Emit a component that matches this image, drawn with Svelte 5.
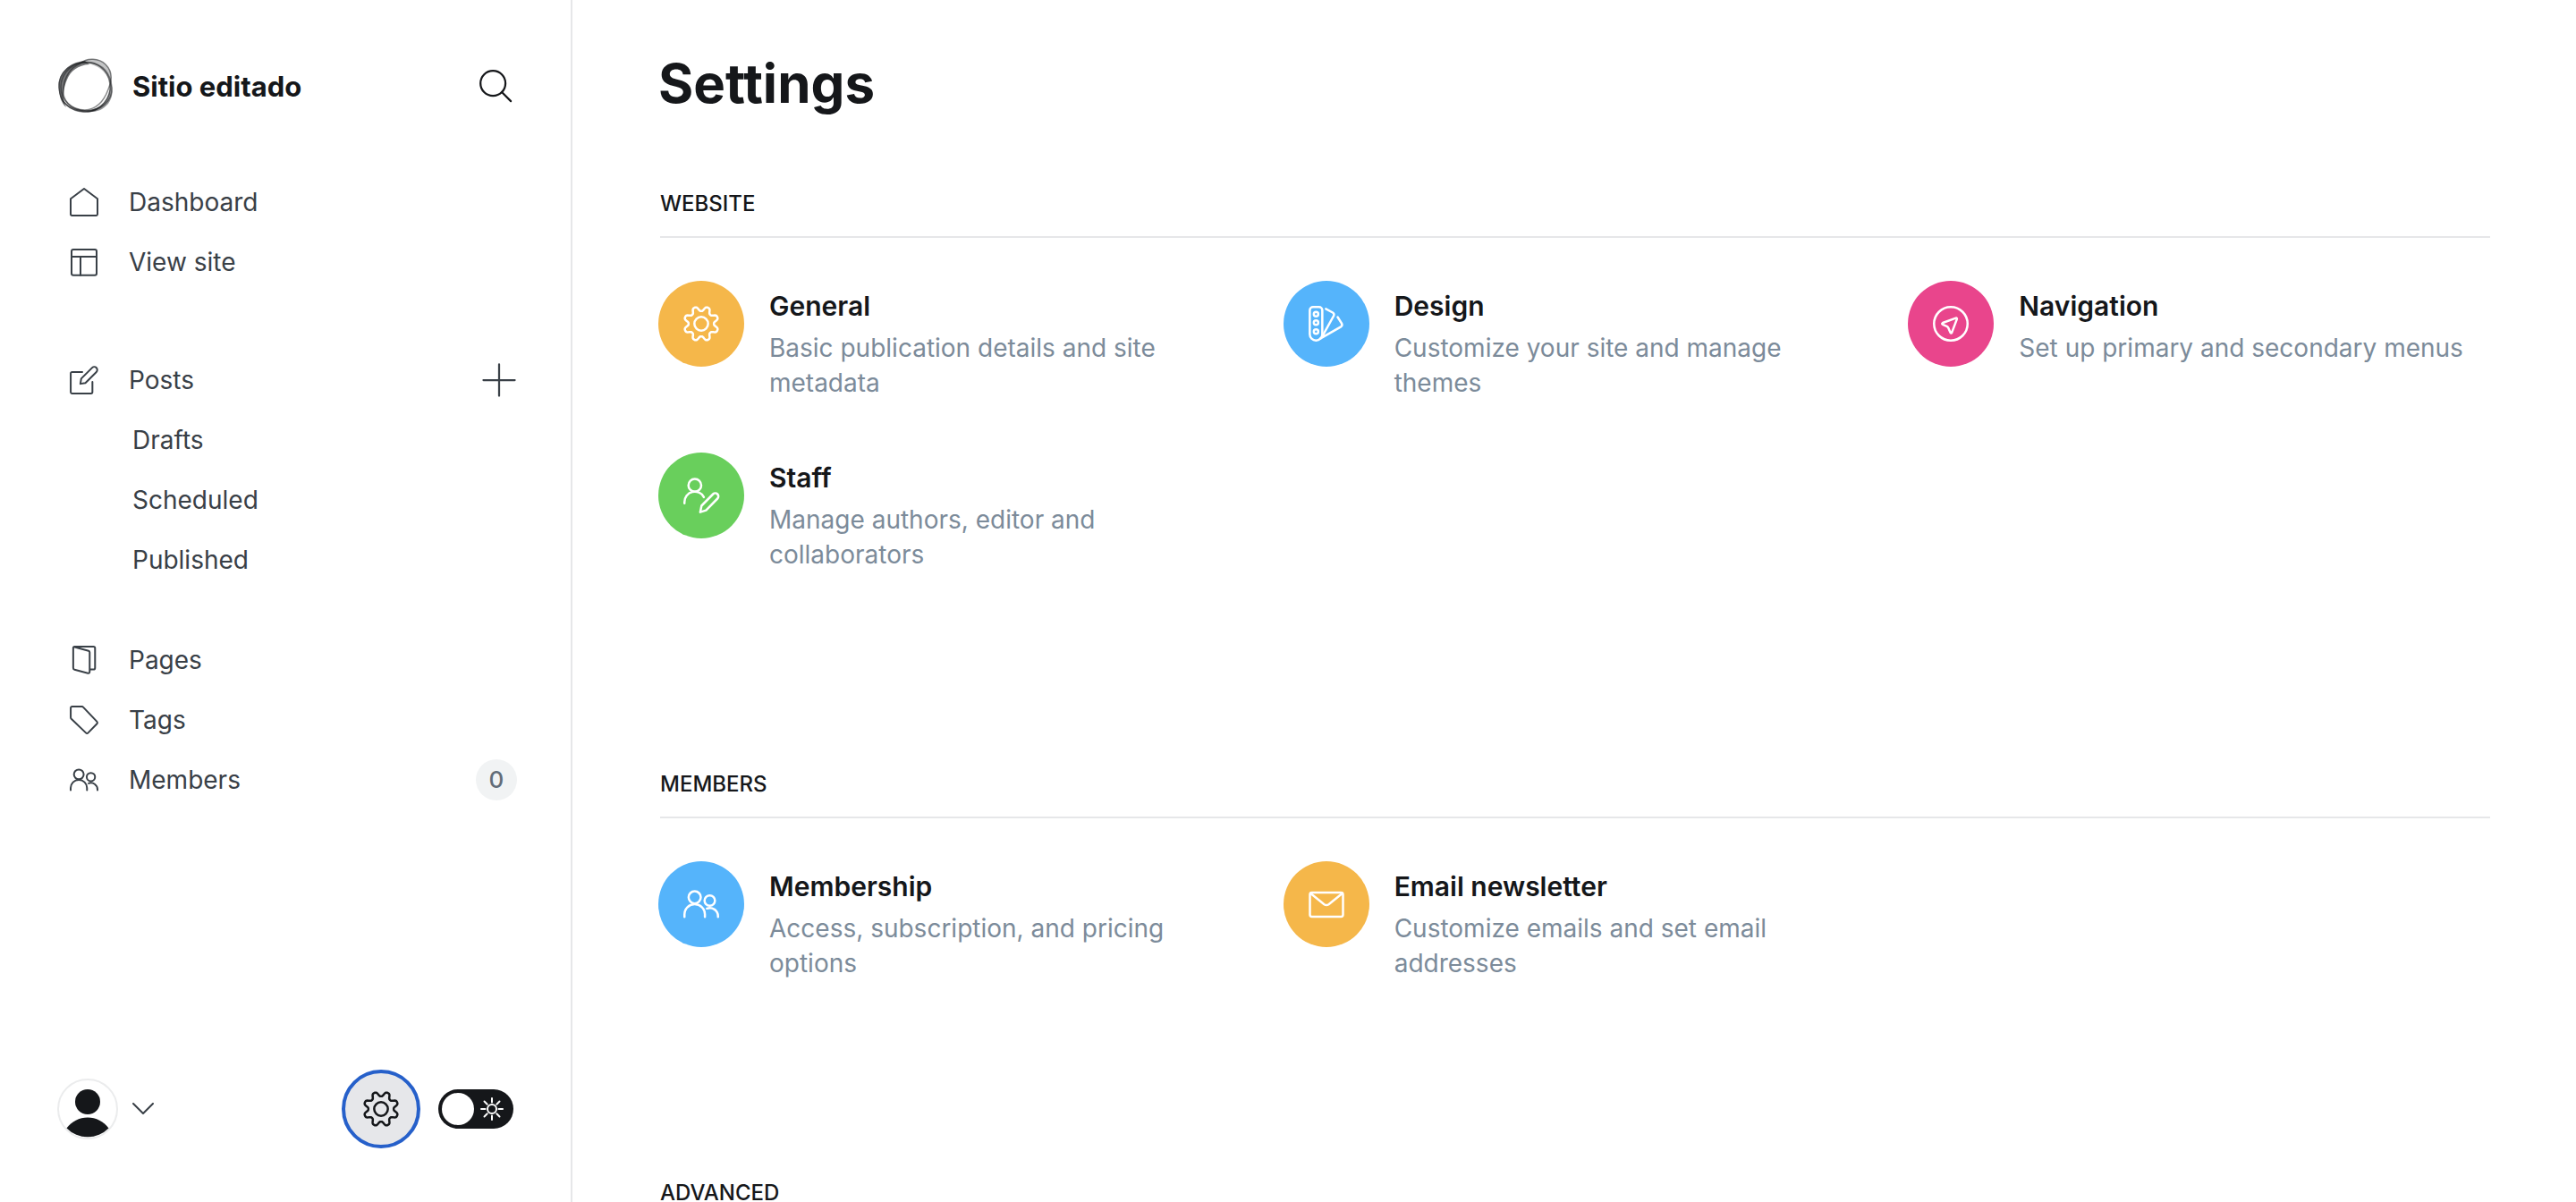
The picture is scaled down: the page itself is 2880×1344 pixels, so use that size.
<script>
  const website = [
    { icon: 'gear', color: 'yellow', title: 'General', text: 'Basic publication details and site metadata' },
    { icon: 'swatch', color: 'blue', title: 'Design', text: 'Customize your site and manage themes' },
    { icon: 'compass', color: 'pink', title: 'Navigation', text: 'Set up primary and secondary menus' },
    { icon: 'staff', color: 'green', title: 'Staff', text: 'Manage authors, editor and collaborators' }
  ];
  const members = [
    { icon: 'members', color: 'blue', title: 'Membership', text: 'Access, subscription, and pricing options' },
    { icon: 'email', color: 'yellow', title: 'Email newsletter', text: 'Customize emails and set email addresses' }
  ];
  const sections = [
    { id: 'website', name: 'Website', items: website },
    { id: 'members', name: 'Members', items: members },
    { id: 'advanced', name: 'Advanced', items: [] }
  ];

  // Eight rounded teeth around a hub, on a 24 unit grid
  function gearPath() {
    const pts = [];
    for (let i = 0; i < 192; i++) {
      const a = (i / 192) * Math.PI * 2;
      const wave = -Math.cos(8 * a);
      const r = 10.1 + 1.8 * Math.tanh(wave * 1.4);
      pts.push((12 + r * Math.cos(a)).toFixed(2) + ' ' + (12 + r * Math.sin(a)).toFixed(2));
    }
    return 'M' + pts.join('L') + 'Z';
  }
  const gear = gearPath();
  let night = $state(false);
</script>

{#snippet icon(name)}
  <svg class="icon" viewBox="0 0 24 24" aria-hidden="true">
    {#if name === 'home'}
      <path d="M.75 9.2 12 .75 23.25 9.2V22a1.2 1.2 0 0 1-1.2 1.2H1.95A1.2 1.2 0 0 1 .75 22z" />
    {:else if name === 'layout'}
      <rect x="1.5" y="1.5" width="21" height="21.5" rx="1.5" /><path d="M1.5 7.5h21M9 7.5V23" />
    {:else if name === 'posts'}
      <path d="M10.5 5.2H2A1.2 1.2 0 0 0 .8 6.4V22A1.2 1.2 0 0 0 2 23.2h15.8A1.2 1.2 0 0 0 19 22v-8.5" />
      <path d="m8.9 15.1.7-4.3 9.2-9.2a2.4 2.4 0 0 1 3.5 3.6l-9.2 9.2z" />
    {:else if name === 'pages'}
      <path d="M3.4.9 15.8 4.3q.9.3.9 1.3v16.2q0 1.6-1.5 1.2L4 20.1q-1.1-.3-1.1-1.5V1.9q0-1.2 1.2-1.2h15.7q1.4 0 1.4 1.4v16.4q0 1.4-1.4 1.4h-3.1" />
    {:else if name === 'tags'}
      <path d="M.8 9.9V2A1.2 1.2 0 0 1 2 .8h8.1a1.8 1.8 0 0 1 1.3.6l11.4 12a1.3 1.3 0 0 1 0 1.8l-7.4 7.6a1.3 1.3 0 0 1-1.9 0L1.3 11.1a1.8 1.8 0 0 1-.5-1.2z" />
    {:else if name === 'members'}
      <circle cx="7.6" cy="7.4" r="4.1" /><path d="M.75 20.6v-1.8a6.6 6.6 0 0 1 13.7 0v1.8" />
      <circle cx="17.7" cy="9.6" r="3.5" /><path d="M15.8 14.9a5.5 5.5 0 0 1 7.45 5.2v.5" />
    {:else if name === 'staff'}
      <circle cx="7.7" cy="5.2" r="4.3" /><path d="M.75 17.3v-.9a6.9 6.9 0 0 1 13-3.3" />
      <path d="m11.3 23.2.9-4.3 7.7-7.8a2.1 2.1 0 0 1 3 3l-7.7 7.9z" />
    {:else if name === 'gear'}
      <path d={gear} /><circle cx="12" cy="12" r="4.6" />
    {:else if name === 'swatch'}
      <path d="M.8 3A2.2 2.2 0 0 1 3 .8h4A2.2 2.2 0 0 1 9.2 3v16a4.2 4.2 0 0 1-8.4 0z" />
      <circle cx="5" cy="5.5" r="1.5" /><circle cx="5" cy="11.3" r="1.5" /><circle cx="5" cy="17.2" r="1.5" />
      <path d="m11.6 2 4.6 2.5a1.7 1.7 0 0 1 .7 2.1L9.2 20.5M19.5 7.5l2.7 4.3a1.7 1.7 0 0 1-.5 2.2L7.8 22" />
    {:else if name === 'compass'}
      <circle cx="12" cy="12" r="11.25" />
      <path d="M15.4 8.2 6.6 11.4q-.9.5 0 1.1l2.700 1.200q.8.400 1.100 1.200l1.300 3q.6.800 1 0l3.400-9q.2-.9-.7-.7z" />
    {:else if name === 'email'}
      <rect x=".9" y="4.2" width="22.2" height="16.2" rx="1.3" /><path d="m1.6 4.9 8.9 7.2q1.5 1 3 0l8.9-7.2" />
    {:else if name === 'search'}
      <circle cx="10.1" cy="10.1" r="9.3" /><path d="m16.7 16.7 6.7 6.7" />
    {:else if name === 'plus'}
      <path d="M12 .3v23.4M.3 12h23.4" />
    {:else if name === 'sun'}
      <circle cx="12" cy="12" r="5" /><path d="M12 0v4.5M12 19.5V24M0 12h4.5M19.5 12H24M3.5 3.5l3.2 3.2M17.3 17.3l3.2 3.2M20.5 3.5l-3.2 3.2M6.7 17.3l-3.2 3.2" />
    {/if}
  </svg>
{/snippet}

<div class="app">
  <aside class="sidebar">
    <header class="site">
      <svg class="logo" viewBox="0 0 64 64" aria-hidden="true">
        <path class="dark" d="M31 4C14 5 1 17 1.5 33 2 44 5 52 10 56 5 46 7 34 11 25 15 15 23 9 36 8z" />
        <path class="light" d="M26 6C34 0 46 1 53 7c7 6 9 14 6 22C57 20 49 11 38 8z" />
        <path class="mid" d="M58 24c5 9 5 20-1 28-7 8-15 10-25 9 12-2 20-8 24-17 3-7 4-13 2-20z" />
        <path class="dark" d="M3 42c5 11 14 16 25 17 9 1 18-2 25-7-8 8-17 11-27 9C14 59 5 52 3 42z" />
        <path class="line" d="M36 6C16 4 1 17 2 34c1 16 12 27 29 27 18 0 31-13 30-27C60 19 51 7 36 6z" />
        <path class="line" d="M27 6C42 3 57 13 59 30 61 47 48 60 33 60 17 60 4 49 4 33 4 21 13 9 27 6z" />
        <path class="line" d="M26 7C33 0 47 1 54 8c8 8 7 19 3 28-4 11-12 22-26 23C15 59 5 48 7 35 8 22 15 11 26 7z" />
      </svg>
      <strong>Sitio editado</strong>
      <button class="plain search" aria-label="Search">{@render icon('search')}</button>
    </header>

    <nav>
      <ul class="first">
        <li><a href="#dashboard">{@render icon('home')}Dashboard</a></li>
        <li><a href="#site">{@render icon('layout')}View site</a></li>
      </ul>
      <ul>
        <li>
          <a href="#posts">{@render icon('posts')}Posts</a>
          <a class="add" href="#new-post" aria-label="New post">{@render icon('plus')}</a>
        </li>
        <li class="sub"><a href="#drafts">Drafts</a></li>
        <li class="sub"><a href="#scheduled">Scheduled</a></li>
        <li class="sub"><a href="#published">Published</a></li>
      </ul>
      <ul>
        <li><a href="#pages">{@render icon('pages')}Pages</a></li>
        <li><a href="#tags">{@render icon('tags')}Tags</a></li>
        <li><a href="#all-members">{@render icon('members')}Members</a><span class="count">0</span></li>
      </ul>
    </nav>

    <footer>
      <button class="plain user" aria-label="Account menu">
        <svg class="avatar" viewBox="0 0 68 68" aria-hidden="true">
          <circle class="ring" cx="34" cy="34" r="33" />
          <circle cx="34" cy="26" r="14" /><path d="M10.5 55.500a29 29 0 0 1 47 0 33 33 0 0 1-47 0z" />
        </svg>
        <svg class="chevron" viewBox="0 0 24 14" aria-hidden="true"><path d="m1 1 11 11L23 1" /></svg>
      </button>
      <a class="settings" href="#settings" aria-label="Settings">{@render icon('gear')}</a>
      <label class="toggle">
        <input type="checkbox" bind:checked={night} aria-label="Night mode" />
        <span class="knob"></span>
        {@render icon('sun')}
      </label>
    </footer>
  </aside>

  <main>
    <h1>Settings</h1>
    {#each sections as section (section.id)}
      <section>
        <h2>{section.name}</h2>
        <div class="grid">
          {#each section.items as item (item.title)}
            <a class="card" href={'#' + item.icon}>
              <span class="disc {item.color}">{@render icon(item.icon)}</span>
              <span class="copy">
                <span class="title">{item.title}</span>
                <span class="text">{item.text}</span>
              </span>
            </a>
          {/each}
        </div>
      </section>
    {/each}
  </main>
</div>

<style>
  :global(body) {
    margin: 0;
    background: #fff;
  }
  .app {
    display: grid;
    grid-template-columns: 640px minmax(0, 1fr);
    height: 100vh;
    overflow: hidden;
    font-family: Inter, 'Liberation Sans', sans-serif;
    font-optical-sizing: none;
    font-size: 28px;
    line-height: 40px;
    color: #15171a;
  }
  a {
    color: inherit;
    text-decoration: none;
  }
  .plain {
    border: 0;
    padding: 0;
    background: none;
    color: inherit;
    font: inherit;
    cursor: pointer;
  }
  .icon {
    display: block;
    flex: none;
    width: 32px;
    height: 32px;
    fill: none;
    stroke: currentColor;
    stroke-width: 1.5;
    stroke-linecap: round;
    stroke-linejoin: round;
    overflow: visible;
  }

  .sidebar {
    display: flex;
    flex-direction: column;
    box-sizing: border-box;
    border-right: 2px solid #e6e7e9;
    padding: 64px 64px 60px;
  }
  .site {
    display: flex;
    align-items: center;
    gap: 20px;
    height: 64px;
    font-size: 31px;
  }
  .site strong {
    flex: 1;
    padding-top: 2px;
    font-weight: 700;
  }
  .logo {
    width: 64px;
    height: 64px;
    fill: #15171a;
  }
  .dark {
    fill-opacity: 0.6;
  }
  .mid {
    fill-opacity: 0.45;
  }
  .light {
    fill-opacity: 0.25;
  }
  .line {
    fill: none;
    stroke: #15171a;
    stroke-opacity: 0.5;
    stroke-width: 1.5;
  }
  .search {
    margin-right: 2px;
  }
  .search .icon {
    width: 36px;
    height: 36px;
  }

  nav {
    display: flex;
    flex-direction: column;
    gap: 45px;
    margin: 64px -4px 0 0;
    color: #394047;
  }
  ul {
    margin: 0;
    padding: 0;
    list-style: none;
  }
  .first {
    margin-bottom: 20px;
  }
  li {
    display: flex;
    align-items: center;
    justify-content: space-between;
    height: 67px;
    padding-left: 14px;
  }
  li a {
    display: flex;
    align-items: center;
    gap: 34px;
  }
  .sub {
    padding-left: 84px;
  }
  .add {
    margin-right: 2px;
  }
  .add .icon {
    width: 36px;
    height: 36px;
  }
  .count {
    min-width: 46px;
    border-radius: 24px;
    background: #f1f3f4;
    color: #626d79;
    font-size: 26px;
    font-weight: 500;
    line-height: 46px;
    text-align: center;
  }

  footer {
    display: flex;
    align-items: center;
    margin-top: auto;
  }
  .user {
    display: flex;
    align-items: center;
    gap: 16px;
    margin-right: auto;
  }
  .avatar {
    width: 68px;
    height: 68px;
    fill: #15171a;
  }
  .ring {
    fill: #fff;
    stroke: #ebeced;
    stroke-width: 2;
  }
  .chevron {
    width: 24px;
    height: 14px;
    fill: none;
    stroke: #394047;
    stroke-width: 2;
    stroke-linecap: round;
    stroke-linejoin: round;
  }
  .settings {
    display: grid;
    place-items: center;
    box-sizing: border-box;
    width: 88px;
    height: 88px;
    margin-right: 20px;
    border: 4px solid #2660ca;
    border-radius: 50%;
    background: #e6e7ea;
  }
  .settings .icon,
  .disc .icon {
    width: 40px;
    height: 40px;
  }
  .toggle {
    display: flex;
    align-items: center;
    box-sizing: border-box;
    width: 84px;
    height: 44px;
    padding: 4px 12px 4px 4px;
    border-radius: 22px;
    background: #15171a;
    color: #fff;
    cursor: pointer;
  }
  .toggle input {
    position: absolute;
    opacity: 0;
  }
  .knob {
    width: 36px;
    height: 36px;
    margin-right: auto;
    border-radius: 50%;
    background: #fff;
  }
  .toggle .icon {
    width: 24px;
    height: 24px;
    stroke-width: 2;
  }

  main {
    padding: 54px 96px 0;
    overflow: hidden;
  }
  h1 {
    margin: 0 0 82px;
    font-size: 60px;
    font-weight: 700;
    line-height: 78px;
  }
  section {
    min-height: 649px;
  }
  section:nth-of-type(2) {
    min-height: 457px;
  }
  h2 {
    margin: 0 0 48px 2px;
    padding-bottom: 22px;
    border-bottom: 2px solid #e6e7e9;
    font-size: 24px;
    font-weight: 500;
    line-height: 28px;
    text-transform: uppercase;
  }
  .grid {
    display: grid;
    grid-template-columns: repeat(3, minmax(0, 1fr));
    gap: 48px;
  }
  .card {
    display: flex;
    align-items: flex-start;
    gap: 28px;
    min-height: 144px;
  }
  .disc {
    display: grid;
    flex: none;
    place-items: center;
    width: 96px;
    height: 96px;
    border-radius: 50%;
    color: #fff;
  }
  .yellow { background: #f5b74a; }
  .blue { background: #55b4fb; }
  .pink { background: #e9458c; }
  .green { background: #69cf5c; }
  .copy {
    display: flex;
    flex-direction: column;
    gap: 8px;
    padding-top: 8px;
  }
  .title {
    font-size: 30px;
    font-weight: 600;
  }
  .text {
    color: #7c8b9a;
    line-height: 39px;
  }
</style>
